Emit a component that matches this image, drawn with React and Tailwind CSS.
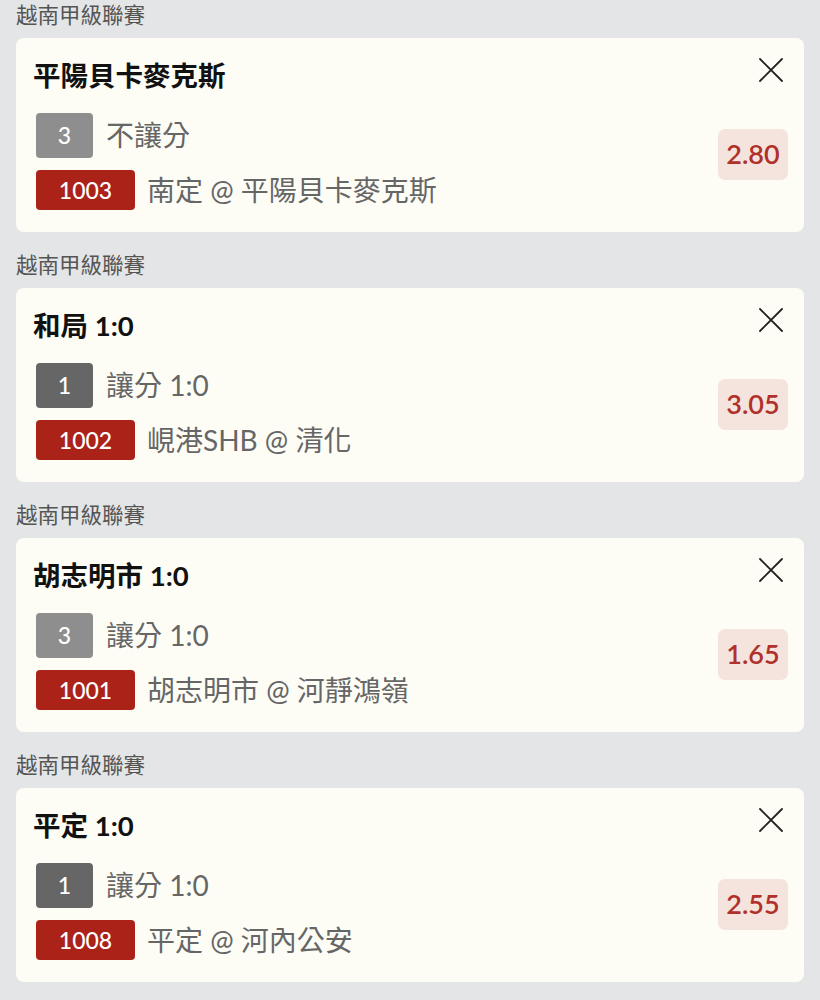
const BETS = [
  { league: '越南甲級聯賽', title: '平陽貝卡麥克斯', pick: '3', pickTone: 'light', market: '不讓分', code: '1003', match: '南定 @ 平陽貝卡麥克斯', odds: '2.80' },
  { league: '越南甲級聯賽', title: '和局 1:0', pick: '1', pickTone: 'dark', market: '讓分 1:0', code: '1002', match: '峴港SHB @ 清化', odds: '3.05' },
  { league: '越南甲級聯賽', title: '胡志明市 1:0', pick: '3', pickTone: 'light', market: '讓分 1:0', code: '1001', match: '胡志明市 @ 河靜鴻嶺', odds: '1.65' },
  { league: '越南甲級聯賽', title: '平定 1:0', pick: '1', pickTone: 'dark', market: '讓分 1:0', code: '1008', match: '平定 @ 河內公安', odds: '2.55' },
]

function CloseIcon() {
  return (
    <svg width="24" height="24" viewBox="0 0 24 24" fill="none" stroke="#222" strokeWidth="1.8" strokeLinecap="round">
      <path d="M1 1L23 23M23 1L1 23" />
    </svg>
  )
}

function BetCard({ bet }) {
  return (
    <div className="flex rounded-[8px] bg-[#fdfdf6]">
      <div className="flex-1 min-w-0 pt-[20px] pb-[22px] pl-[17px]">
        <div className="h-[36px] leading-[36px] text-[27.5px] font-bold text-[#111]">{bet.title}</div>
        <div className="mt-[19px] ml-[3px] flex items-center gap-[13px]">
          <span className={`w-[57px] h-[45px] rounded-[4px] flex items-center justify-center text-white text-[23px] font-medium ${bet.pickTone === 'dark' ? 'bg-[#666666]' : 'bg-[#8e8e8e]'}`}>
            {bet.pick}
          </span>
          <span className="text-[28px] leading-[45px] text-[#666]">{bet.market}</span>
        </div>
        <div className="mt-[12px] ml-[3px] flex items-center gap-[12px]">
          <span className="w-[99px] h-[40px] rounded-[4px] bg-[#ab2219] flex items-center justify-center text-white text-[23px] font-medium">
            {bet.code}
          </span>
          <span className="text-[28px] leading-[40px] text-[#666]">{bet.match}</span>
        </div>
      </div>
      <div className="flex flex-col items-end pt-[20px] pr-[16px]">
        <div className="mr-[5px]"><CloseIcon /></div>
        <div className="mt-[47px] w-[70px] h-[51px] rounded-[7px] bg-[#f5e4dd] flex items-center justify-center text-[27px] font-semibold text-[#b0302a]">
          {bet.odds}
        </div>
      </div>
    </div>
  )
}

export default function App() {
  return (
    <div className="min-h-[1000px] bg-[#e4e5e7] px-[16px] pb-[18px] flex flex-col gap-[18px]" style={{ fontFamily: 'Lato, "Noto Sans CJK TC", sans-serif' }}>
      {BETS.map((bet, i) => (
        <div key={i}>
          <div className="h-[30px] leading-[30px] mb-[8px] text-[21.5px] text-[#555]">{bet.league}</div>
          <BetCard bet={bet} />
        </div>
      ))}
    </div>
  )
}
